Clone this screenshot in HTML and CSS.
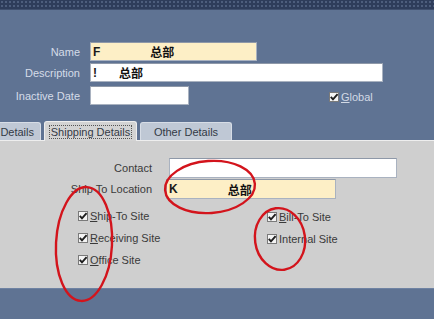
FILE: index.html
```html
<!DOCTYPE html>
<html>
<head>
<meta charset="utf-8">
<link rel="stylesheet" href="styles.css">
</head>
<body>
<div class="page">
  <div class="topband"></div>
  <div class="header">
    <div class="form-grid">
      <label class="hlabel">Name</label>
      <div class="field field-name yellow"><span class="lead">F</span><span class="gap1"></span><b>总部</b></div>
      <label class="hlabel">Description</label>
      <div class="field field-desc"><span class="lead">!</span><span class="gap2"></span><b>总部</b></div>
      <label class="hlabel">Inactive Date</label>
      <div class="row-inactive">
        <div class="field field-date"></div>
        <div class="check global"><span class="box"><svg width="10" height="10" viewBox="0 0 10 10"><rect x="0.5" y="0.5" width="9" height="9" fill="#f4f4f4" stroke="#7a7a7a"/><path d="M1.8 4.8 L4 7.4 L8.6 2.2" stroke="#1e1e1e" stroke-width="1.9" fill="none"/></svg></span><span class="lbl light"><u>G</u>lobal</span></div>
      </div>
    </div>
  </div>
  <div class="tabs">
    <div class="tab tab-first">Details</div>
    <div class="tab tab-active"><span class="focus">Shipping Details</span></div>
    <div class="tab tab-other">Other Details</div>
  </div>
  <div class="panel">
    <div class="panel-grid">
      <label class="plabel">Contact</label>
      <div class="field field-contact"></div>
      <label class="plabel">Ship To Location</label>
      <div class="field field-ship yellow"><span class="lead">K</span><span class="gap3"></span><b>总部</b></div>
    </div>
    <div class="checks">
      <div class="col col-left">
        <div class="check"><span class="box"><svg width="10" height="10" viewBox="0 0 10 10"><rect x="0.5" y="0.5" width="9" height="9" fill="#f4f4f4" stroke="#7a7a7a"/><path d="M1.8 4.8 L4 7.4 L8.6 2.2" stroke="#1e1e1e" stroke-width="1.9" fill="none"/></svg></span><span class="lbl"><u>S</u>hip-To Site</span></div>
        <div class="check"><span class="box"><svg width="10" height="10" viewBox="0 0 10 10"><rect x="0.5" y="0.5" width="9" height="9" fill="#f4f4f4" stroke="#7a7a7a"/><path d="M1.8 4.8 L4 7.4 L8.6 2.2" stroke="#1e1e1e" stroke-width="1.9" fill="none"/></svg></span><span class="lbl"><u>R</u>eceiving Site</span></div>
        <div class="check"><span class="box"><svg width="10" height="10" viewBox="0 0 10 10"><rect x="0.5" y="0.5" width="9" height="9" fill="#f4f4f4" stroke="#7a7a7a"/><path d="M1.8 4.8 L4 7.4 L8.6 2.2" stroke="#1e1e1e" stroke-width="1.9" fill="none"/></svg></span><span class="lbl"><u>O</u>ffice Site</span></div>
      </div>
      <div class="col col-right">
        <div class="check"><span class="box"><svg width="10" height="10" viewBox="0 0 10 10"><rect x="0.5" y="0.5" width="9" height="9" fill="#f4f4f4" stroke="#7a7a7a"/><path d="M1.8 4.8 L4 7.4 L8.6 2.2" stroke="#1e1e1e" stroke-width="1.9" fill="none"/></svg></span><span class="lbl"><u>B</u>ill-To Site</span></div>
        <div class="check"><span class="box"><svg width="10" height="10" viewBox="0 0 10 10"><rect x="0.5" y="0.5" width="9" height="9" fill="#f4f4f4" stroke="#7a7a7a"/><path d="M1.8 4.8 L4 7.4 L8.6 2.2" stroke="#1e1e1e" stroke-width="1.9" fill="none"/></svg></span><span class="lbl">Internal Site</span></div>
      </div>
    </div>
  </div>
  <div class="footer"></div>
  <svg class="marks" width="434" height="319" viewBox="0 0 434 319">
    <ellipse cx="210" cy="187" rx="45" ry="26" transform="rotate(-4 210 187)" fill="none" stroke="#d3141c" stroke-width="2.4"/>
    <ellipse cx="84" cy="244" rx="28" ry="57" transform="rotate(3 84 244)" fill="none" stroke="#d3141c" stroke-width="2.4"/>
    <ellipse cx="280" cy="239" rx="25" ry="31" transform="rotate(-8 280 239)" fill="none" stroke="#d3141c" stroke-width="2.4"/>
  </svg>
</div>
</body>
</html>
```

FILE: styles.css
```css
* { box-sizing: border-box; }
html, body { margin: 0; padding: 0; }
body {
  width: 434px;
  height: 319px;
  overflow: hidden;
  font-family: "Liberation Sans", Arial, "Noto Sans CJK SC", sans-serif;
  font-size: 11px;
  background: #5f7393;
}
.page { position: relative; width: 434px; height: 319px; display: flex; flex-direction: column; }
.topband {
  height: 10px;
  background-color: #2e3d5b;
  background-image: radial-gradient(circle, #4d5e7d 0.8px, transparent 1.2px);
  background-size: 4px 4px;
  border-bottom: 1px solid #40506e;
}
.header {
  height: 111px;
  padding-top: 32px;
}
.form-grid {
  display: grid;
  grid-template-columns: 80px auto;
  column-gap: 10px;
  row-gap: 2px;
  align-items: center;
  justify-items: start;
}
.hlabel { justify-self: end; color: #d5dce8; }
.field {
  height: 19px;
  background: #ffffff;
  border: 1px solid #a9b2c0;
  border-top-color: #8e98a8;
  display: flex;
  align-items: center;
  padding-left: 2px;
  font-size: 12px;
  color: #111;
}
.lead { font-family: "Liberation Sans", Arial, sans-serif; color: #1a1a1a; font-weight: 700; }
.field b { font-family: "Noto Sans CJK SC", sans-serif; font-weight: 700; font-size: 12px; color: #111; }
.yellow { background: #fdefc6; }
.field-name { width: 167px; }
.field-desc { width: 293px; }
.field-date { width: 99px; }
.gap1 { width: 50px; }
.gap2 { width: 22px; }
.gap3 { width: 50px; }
.row-inactive { display: flex; align-items: center; }
.check { display: flex; align-items: center; gap: 2px; height: 20px; }
.box { display: flex; width: 10px; height: 10px; }
.global { margin-left: 140px; margin-top: 3px; }
.lbl { color: #3a3a3a; font-size: 11px; }
.lbl.light { color: #d2d9e5; }
.lbl u { text-decoration-thickness: 1px; text-underline-offset: 1px; }
.tabs {
  height: 19px;
  display: flex;
  align-items: flex-end;
  gap: 3px;
}
.tab {
  height: 18px;
  display: flex;
  align-items: center;
  justify-content: center;
  color: #333a46;
  background: #bfc8d5;
  border-radius: 3px 3px 0 0;
  border: 1px solid #d7dde6;
  border-bottom: none;
}
.tab-first { width: 41px; justify-content: flex-end; padding-right: 6px; border-left: none; border-radius: 0 3px 0 0; }
.tab-active { width: 93px; height: 20px; background: #d3d3d3; border-color: #eeeeee; margin-bottom: -1px; position: relative; z-index: 1; }
.tab-active .focus { border: 1px dotted #555; padding: 0 1px; line-height: 12px; }
.tab-other { width: 92px; }
.panel {
  height: 148px;
  background: #cfcfcf;
  border-top: 1px solid #eeeeee;
  padding-top: 17px;
}
.panel-grid {
  display: grid;
  grid-template-columns: 152px auto;
  column-gap: 15px;
  row-gap: 1px;
  align-items: center;
  justify-items: start;
}
.plabel { justify-self: end; color: #3a3a3a; }
.field-contact { width: 228px; height: 20px; margin-left: 2px; }
.field-ship { width: 170px; height: 20px; margin-left: -1px; }
.checks { display: flex; margin-top: 7px; }
.col { display: flex; flex-direction: column; gap: 2px; }
.col-left { margin-left: 78px; width: 189px; }
.col-right { margin-top: 1px; }
.footer { flex: 1; background: #5f7393; border-top: 1px solid #6e82a2; }
.marks { position: absolute; left: 0; top: 0; pointer-events: none; }
```
